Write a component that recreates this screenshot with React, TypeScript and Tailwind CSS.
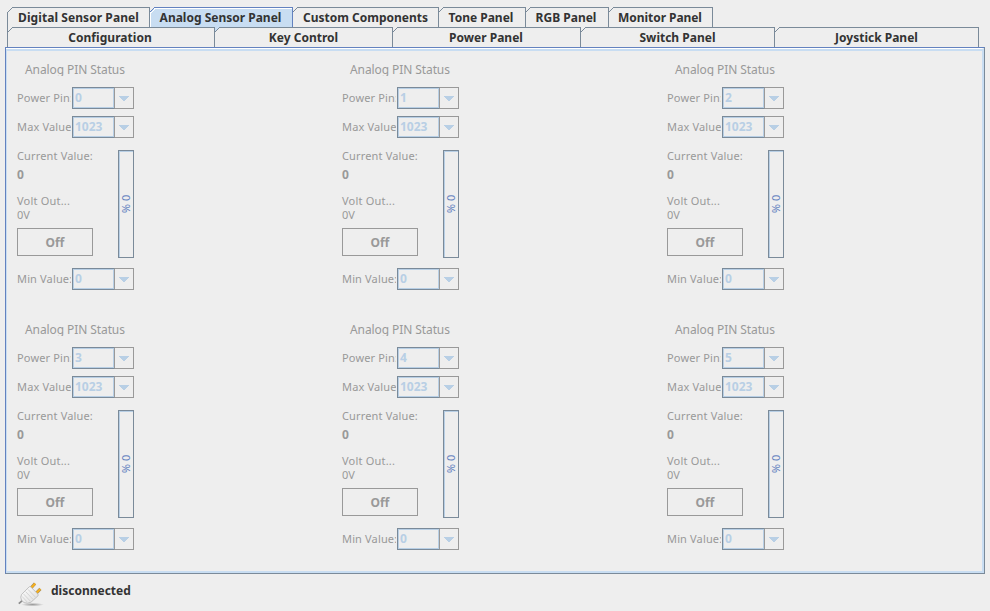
import React from "react";

type TabProps = {
  label: string;
  w: string;
  first?: boolean;
  selected?: boolean;
  lower?: boolean;
  corner?: string;
  text?: string;
};

function Tab({ label, w, first, selected, lower, corner = "#eeeeee", text = "" }: TabProps) {
  const line = selected ? "#6382bf" : "#7a8a99";
  const x = first ? 1 : 0;
  return (
    <div className={`relative h-5 shrink-0 ${w}`}>
      <div
        className={`h-full border-r border-t ${
          selected ? "border-[#6382bf] bg-[#c8ddf2] shadow-[inset_1px_1px_0_#ffffff]" : "border-[#7a8a99]"
        } ${first ? "border-l" : ""}`}
      >
        <div className={`whitespace-nowrap text-center text-[12px] font-bold leading-[19px] ${text}`}>{label}</div>
      </div>
      <svg className="absolute left-0 top-0" width="8" height="8" shapeRendering="crispEdges">
        {[0, 1, 2, 3, 4].map((i) => (
          <React.Fragment key={i}>
            <rect x={first && !lower ? 0 : x} y={i} width={5 - i + (first && !lower ? 1 : 0)} height="1" fill={corner} />
            {selected && <rect x={5 - i} y={i + 1} width="1" height="1" fill="#ffffff" />}
            <rect x={x + 4 - i} y={i} width="1" height="1" fill={line} />
          </React.Fragment>
        ))}
      </svg>
    </div>
  );
}

function Combo({ label, value }: { label: string; value: string }) {
  return (
    <div className="flex h-[22px] w-[117px] items-center">
      <div className="w-[54px] mr-px shrink-0 overflow-hidden whitespace-nowrap text-[11px] leading-[22px] tracking-[0.15px]">
        {label}
      </div>
      <div className="h-[22px] w-[43px] border border-[#7a8a99] border-r-[#999999] shadow-[inset_1px_1px_0_#b8cfe5,inset_-1px_-1px_0_#b8cfe5]">
        <div className="pl-[2px] text-[12px] font-bold leading-[20px] text-[#b8cfe5]">{value}</div>
      </div>
      <div className="h-[22px] w-[19px] border border-l-0 border-[#999999] pl-1 pt-2">
        <svg className="block" width="10" height="5" shapeRendering="crispEdges">
          {[0, 1, 2, 3, 4].map((i) => (
            <rect key={i} x={i} y={i} width={10 - 2 * i} height="1" fill="#b8cfe5" />
          ))}
        </svg>
      </div>
    </div>
  );
}

function SensorCard({ pin }: { pin: number }) {
  return (
    <div className="flex h-[260px] w-[325px] flex-col pl-[11px] text-[#999999]">
      <div className="mt-[10px] h-[15px] overflow-hidden pl-2 text-[12px] leading-[17px] tracking-[-0.09px]">
        Analog PIN Status
      </div>
      <div className="mt-[11px]"><Combo label="Power Pin:" value={String(pin)} /></div>
      <div className="mt-[7px]"><Combo label="Max Value:" value="1023" /></div>
      <div className="mt-3 flex h-[108px] w-[117px] justify-between">
        <div className="w-[76px] text-[11px]">
          <div className="whitespace-nowrap leading-[12px] tracking-[0.15px]">Current Value:</div>
          <div className="mt-[5px] text-[12px] font-bold leading-[15px]">0</div>
          <div className="mt-[12px] leading-[14px] tracking-[0.2px]">Volt Out...</div>
          <div className="leading-[14px]">0V</div>
          <div className="mt-[6px] h-7 border border-[#999999] text-center text-[12px] font-bold leading-[28px]">Off</div>
        </div>
        <div className="flex h-[108px] w-4 items-center justify-center border border-[#7a8a99] shadow-[inset_1px_1px_0_#b8cfe5]">
          <div className="rotate-90 whitespace-nowrap text-[11px] leading-[14px] text-[#6382bf]">0 %</div>
        </div>
      </div>
      <div className="mt-[10px]"><Combo label="Min Value:" value="0" /></div>
    </div>
  );
}

function PlugIcon() {
  return (
    <svg width="26" height="25" viewBox="0 0 26 25">
      <defs>
        <radialGradient id="plugShadow">
          <stop offset="0" stopColor="#999999" />
          <stop offset="1" stopColor="#eeeeee" />
        </radialGradient>
        <linearGradient id="plugBody" x1="0" y1="0" x2="1" y2="1">
          <stop offset="0" stopColor="#ffffff" />
          <stop offset="1" stopColor="#dcdcdc" />
        </linearGradient>
      </defs>
      <ellipse cx="14.5" cy="22.6" rx="11.5" ry="1.8" fill="url(#plugShadow)" />
      <path d="M0.8 21.6L4.5 18.4" stroke="#8c8c8c" strokeWidth="1.8" />
      <path d="M12.8 6.3L17 1.4M17.8 11.6L22.4 6.9" stroke="#9a8a68" strokeWidth="3" />
      <path d="M13 6L17.2 1.5M18 11.2L22.4 7" stroke="#f5b020" strokeWidth="2.2" />
      <path
        d="M11.2 4.8Q12 4.2 12.8 5L20 12.2Q20.6 13 20 13.8L13 20.2Q9.5 22 6 20.6L3.4 18Q2 15 3.6 12.4Z"
        fill="url(#plugBody)"
        stroke="#b5b5b5"
        strokeWidth="0.8"
      />
      <path d="M10 7.4L17.5 15.2M7.6 9.6L15 17.4M5.4 11.8L12.4 19.2M4 14.4L9.4 20.2" stroke="#cccccc" strokeWidth="0.8" />
    </svg>
  );
}

export default function App() {
  return (
    <div className="h-[611px] w-[990px] overflow-hidden bg-[#eeeeee] font-['Noto_Sans',sans-serif] text-[#333333]">
      <div className="flex pl-[7px] pt-[7px]">
        <Tab label="Digital Sensor Panel" w="w-[143px]" first text="tracking-[0.07px]" />
        <Tab label="Analog Sensor Panel" w="w-[143px]" selected text="pr-px" />
        <Tab label="Custom Components" w="w-[146px]" />
        <Tab label="Tone Panel" w="w-[87px]" text="pr-[2px]" />
        <Tab label="RGB Panel" w="w-[83px]" text="pr-[2px]" />
        <Tab label="Monitor Panel" w="w-[104px]" text="pr-px tracking-[-0.06px]" />
      </div>
      <div className="flex pl-[7px]">
        <Tab label="Configuration" w="w-[208px]" first lower text="pr-[2px] tracking-[0.05px]" />
        <Tab label="Key Control" w="w-[178px]" lower corner="#c8ddf2" />
        <Tab label="Power Panel" w="w-[188px]" lower text="pr-px" />
        <Tab label="Switch Panel" w="w-[194px]" lower />
        <Tab label="Joystick Panel" w="w-[204px]" lower />
      </div>
      <div className="ml-[5px] h-[527px] w-[980px] border border-b-[#7a8a99] border-l-[#6382bf] border-r-[#7a8a99] border-t-[#6382bf]">
        <div className="h-full border-b-2 border-r-2 border-t border-[#c8ddf2] border-t-white">
          <div className="h-full border-l border-t-2 border-[#c8ddf2]">
            <div className="-ml-px grid w-[975px] grid-cols-3">
              {[0, 1, 2, 3, 4, 5].map((p) => <SensorCard key={p} pin={p} />)}
            </div>
          </div>
        </div>
      </div>
      <div className="flex items-start pl-[18px] pt-2">
        <PlugIcon />
        <div className="pl-[7px] text-[12px] font-bold leading-[17px]">disconnected</div>
      </div>
    </div>
  );
}
